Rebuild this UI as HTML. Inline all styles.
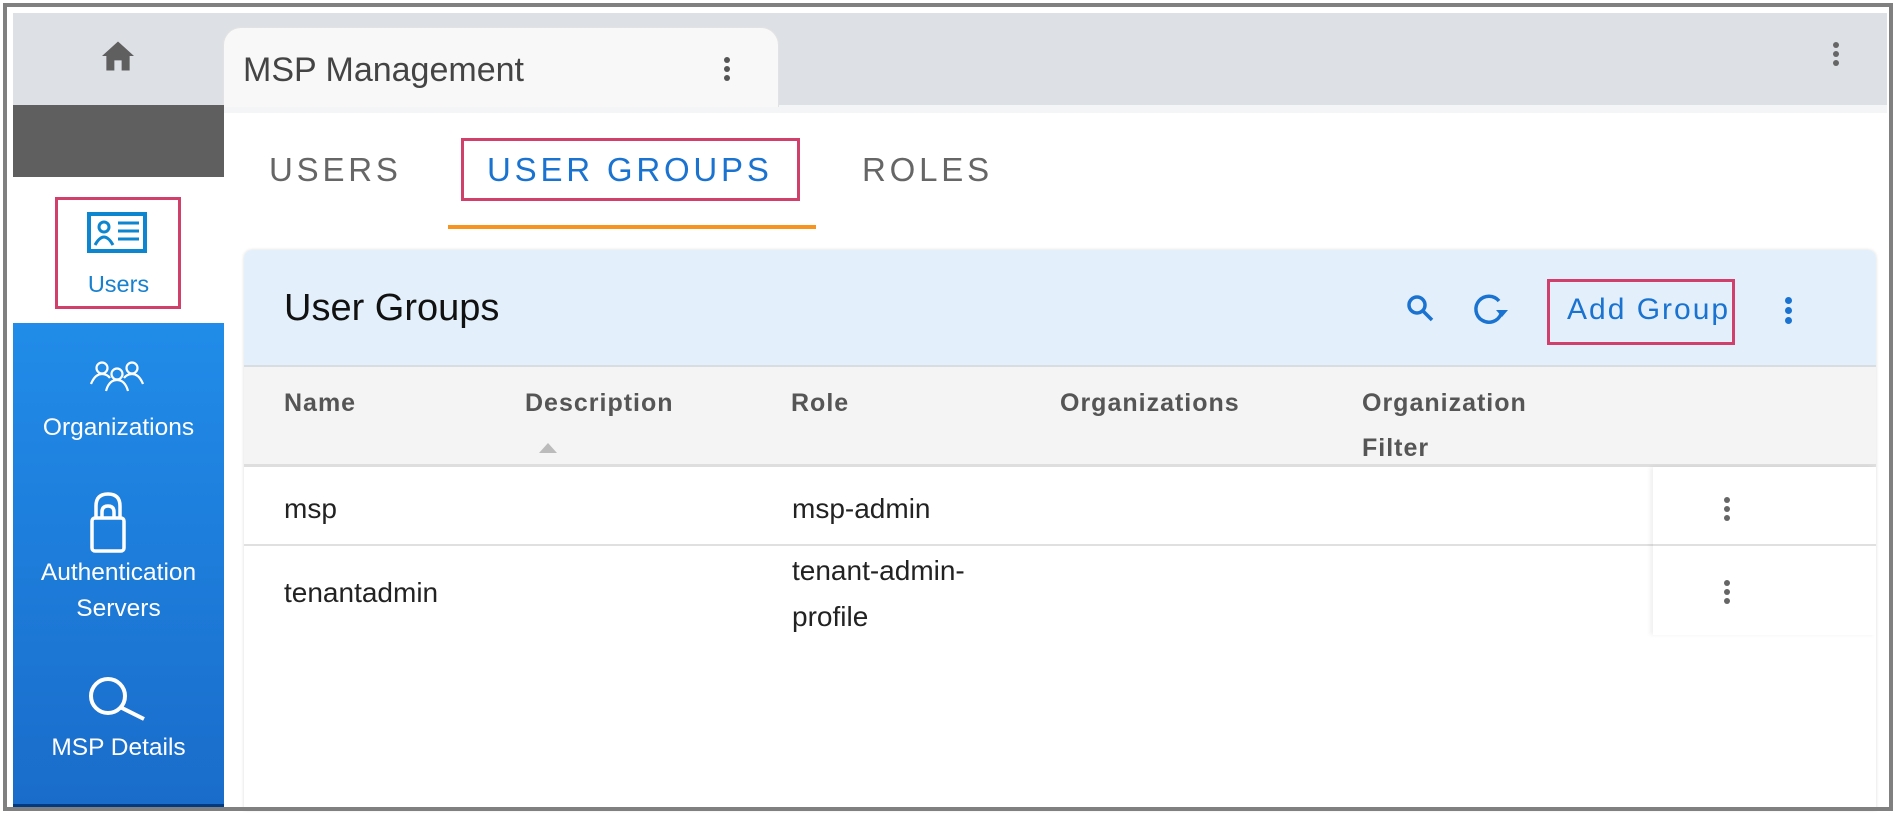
<!DOCTYPE html>
<html><head><meta charset="utf-8">
<style>
*{box-sizing:border-box;margin:0;padding:0}
body{width:1900px;height:816px;overflow:hidden;background:#fff;font-family:"Liberation Sans",Arial,sans-serif;position:relative}
.abs{position:absolute}
.frame{left:3px;top:3px;width:1890px;height:808px;border:4px solid #808080}
.dots{width:6px}
.dots i{display:block;width:6px;height:6px;border-radius:50%;background:currentColor;margin-bottom:3px}
.side-label{width:211px;left:13px;text-align:center;color:#fff;font-size:24.5px}
.th{font-size:25px;font-weight:bold;color:#555;line-height:45px;letter-spacing:1px}
.td{font-size:28px;color:#222;line-height:46px}
</style></head><body>
<div class="abs" style="left:13px;top:13px;width:1874px;height:92px;background:#dde1e5"></div>
<div class="abs" style="left:224px;top:105px;width:1663px;height:8px;background:#f4f5f6"></div>
<svg class="abs" style="left:100px;top:40px" width="36" height="32" viewBox="0 0 24 22"><path d="M12 1 L1 11 H4 V21 H9.5 V14 H14.5 V21 H20 V11 H23 Z" fill="#5f5f5f"/></svg>
<div class="abs" style="left:223px;top:27px;width:556px;height:80px;background:#f8f8f8;border:1px solid #e2e2e2;border-bottom:none;border-radius:18px 18px 0 0"></div>
<div class="abs" style="left:243px;top:51px;font-size:34px;color:#444">MSP Management</div>
<div class="abs dots" style="left:724px;top:57px;color:#555"><i></i><i></i><i></i></div>
<div class="abs dots" style="left:1833px;top:42px;color:#666"><i></i><i></i><i></i></div>
<div class="abs" style="left:13px;top:105px;width:211px;height:72px;background:#5f5f5f"></div>
<div class="abs" style="left:13px;top:323px;width:211px;height:484px;background:linear-gradient(#218ce9,#1a6cca)"></div>
<div class="abs" style="left:13px;top:804px;width:211px;height:4px;background:#003a80"></div>
<div class="abs" style="left:55px;top:197px;width:126px;height:112px;border:3px solid #d0406a"></div>
<svg class="abs" style="left:87px;top:212px" width="60" height="41" viewBox="0 0 60 41"><rect x="2" y="2" width="56" height="37" fill="none" stroke="#0d86d0" stroke-width="4"/><circle cx="17" cy="15" r="5" fill="none" stroke="#0d86d0" stroke-width="3"/><path d="M8 33 Q17 17 26 33" fill="none" stroke="#0d86d0" stroke-width="3"/><path d="M31 11H52M31 19H52M31 27H52" stroke="#0d86d0" stroke-width="3"/></svg>
<div class="abs side-label" style="top:271px;color:#1780cf;font-size:23.5px">Users</div>
<svg class="abs" style="left:89px;top:360px" width="56" height="32" viewBox="0 0 56 32" fill="none" stroke="#fff" stroke-width="2.2"><circle cx="13" cy="8" r="5.5"/><circle cx="43" cy="8" r="5.5"/><circle cx="28" cy="14" r="5.5"/><path d="M2 24 Q6 14 13 14 Q18 14 21 18"/><path d="M54 24 Q50 14 43 14 Q38 14 35 18"/><path d="M17 31 Q20 20 28 20 Q36 20 39 31"/></svg>
<div class="abs side-label" style="top:414px">Organizations</div>
<svg class="abs" style="left:90px;top:492px" width="36" height="62" viewBox="0 0 36 62" fill="none" stroke="#fff" stroke-width="3.5"><path d="M6 26 V14 Q6 2 18 2 Q30 2 30 14 V26"/><path d="M12 26 V20 Q12 14 18 14 Q24 14 24 20 V26"/><rect x="2" y="26" width="32" height="33" rx="3"/></svg>
<div class="abs side-label" style="top:559px">Authentication</div>
<div class="abs side-label" style="top:595px">Servers</div>
<svg class="abs" style="left:86px;top:676px" width="62" height="46" viewBox="0 0 62 46" fill="none" stroke="#fff" stroke-width="4"><circle cx="22" cy="20" r="17"/><path d="M34 31 L58 43"/></svg>
<div class="abs side-label" style="top:734px">MSP Details</div>
<div class="abs" style="left:269px;top:151px;font-size:33px;letter-spacing:3.8px;color:#666">USERS</div>
<div class="abs" style="left:461px;top:138px;width:339px;height:63px;border:3px solid #d0406a"></div>
<div class="abs" style="left:487px;top:151px;font-size:33px;letter-spacing:3.8px;color:#1a73d0">USER GROUPS</div>
<div class="abs" style="left:862px;top:151px;font-size:33px;letter-spacing:3.8px;color:#666">ROLES</div>
<div class="abs" style="left:448px;top:225px;width:368px;height:4px;background:#f7941d"></div>
<div class="abs" style="left:244px;top:250px;width:1632px;height:560px;background:#fff;border-radius:8px 8px 0 0;box-shadow:0 0 3px rgba(0,0,0,0.15)"></div>
<div class="abs" style="left:244px;top:250px;width:1632px;height:117px;background:#e3f0fb;border-radius:8px 8px 0 0;border-bottom:2px solid #d8dde2"></div>
<div class="abs" style="left:284px;top:287px;font-size:38px;color:#111">User Groups</div>
<svg class="abs" style="left:1406px;top:294px" width="30" height="28" viewBox="0 0 30 28" fill="none" stroke="#1a73d0" stroke-width="3.5"><circle cx="11" cy="11" r="8"/><path d="M17 17 L26 26"/></svg>
<svg class="abs" style="left:1472px;top:292px" width="38" height="34" viewBox="0 0 38 34"><path d="M27 9 A13 13 0 1 0 29 22" fill="none" stroke="#1a73d0" stroke-width="3.5"/><path d="M24 18 L36 18 L30 25 Z" fill="#1a73d0"/></svg>
<div class="abs" style="left:1547px;top:279px;width:188px;height:66px;border:3px solid #d0406a"></div>
<div class="abs" style="left:1567px;top:293px;font-size:30px;letter-spacing:2px;color:#1a73d0">Add Group</div>
<div class="abs dots" style="left:1785px;top:297px;color:#1a73d0"><i style="width:7px;height:7px"></i><i style="width:7px;height:7px"></i><i style="width:7px;height:7px"></i></div>
<div class="abs" style="left:244px;top:367px;width:1632px;height:100px;background:#f4f4f4;border-bottom:3px solid #dedede"></div>
<div class="abs th" style="left:284px;top:381px">Name</div>
<div class="abs th" style="left:525px;top:381px">Description</div>
<div class="abs" style="left:539px;top:443px;width:0;height:0;border-left:9px solid transparent;border-right:9px solid transparent;border-bottom:10px solid #bbb"></div>
<div class="abs th" style="left:791px;top:381px">Role</div>
<div class="abs th" style="left:1060px;top:381px">Organizations</div>
<div class="abs th" style="left:1362px;top:381px">Organization<br>Filter</div>
<div class="abs" style="left:244px;top:544px;width:1632px;height:2px;background:#e0e0e0"></div>
<div class="abs" style="left:1653px;top:467px;width:223px;height:168px;box-shadow:-3px 0 4px rgba(0,0,0,0.06)"></div>
<div class="abs td" style="left:284px;top:486px">msp</div>
<div class="abs td" style="left:792px;top:486px">msp-admin</div>
<div class="abs td" style="left:284px;top:570px">tenantadmin</div>
<div class="abs td" style="left:792px;top:548px">tenant-admin-<br>profile</div>
<div class="abs dots" style="left:1724px;top:497px;color:#666"><i></i><i></i><i></i></div>
<div class="abs dots" style="left:1724px;top:580px;color:#666"><i></i><i></i><i></i></div>
<div class="abs frame"></div>
</body></html>
